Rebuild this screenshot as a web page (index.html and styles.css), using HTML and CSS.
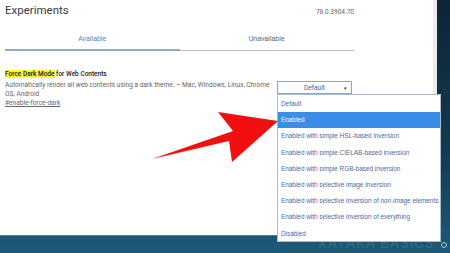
FILE: index.html
```html
<!DOCTYPE html>
<html lang="en">
<head>
    <meta charset="UTF-8">
    <title>Experiments</title>
    <link rel="stylesheet" href="styles.css">
</head>
<body>
    <div class="page">
        <div class="content">
            <header class="top">
                <h1>Experiments</h1>
                <span class="version">78.0.3904.70</span>
            </header>

            <nav class="tabs">
                <div class="tab active">Available</div>
                <div class="tab">Unavailable</div>
            </nav>

            <section class="flag">
                <div class="flag-text">
                    <h3><mark>Force Dark Mode</mark> for Web Contents</h3>
                    <p>Automatically render all web contents using a dark theme. – Mac, Windows, Linux, Chrome OS, Android</p>
                    <a href="#enable-force-dark" class="permalink">#enable-force-dark</a>
                </div>
                <div class="select-box">
                    <span>Default</span>
                    <span class="caret">▾</span>
                </div>
            </section>
        </div>
        <div class="scroll-strip"></div>
    </div>

    <div class="watermark">XATAKA BASICS</div>
    <div class="pin"></div>

    <ul class="dropdown">
        <li>Default</li>
        <li class="selected">Enabled</li>
        <li>Enabled with simple HSL-based inversion</li>
        <li>Enabled with simple CIELAB-based inversion</li>
        <li>Enabled with simple RGB-based inversion</li>
        <li>Enabled with selective image inversion</li>
        <li>Enabled with selective inversion of non-image elements</li>
        <li>Enabled with selective inversion of everything</li>
        <li>Disabled</li>
    </ul>

    <!-- red pointer drawn over the page -->
    <svg class="arrow" width="450" height="253" viewBox="0 0 450 253">
        <polygon points="152,159 233,131 218,112 278,121 232,162 229,141" fill="#f20f0f"/>
    </svg>
</body>
</html>
```

FILE: styles.css
```css
body {
    margin: 0;
    width: 450px;
    height: 253px;
    overflow: hidden;
    font-family: Roboto, "Liberation Sans", sans-serif;
    background: linear-gradient(180deg, #0e2535 0%, #143a50 60%, #1d5a78 100%);
    position: relative;
}

.page {
    display: flex;
    width: 437px;
    height: 235px;
    background: #ffffff;
    border-bottom: 1px solid #4d7f99;
}

.content {
    width: 349px;
    padding-left: 5px;
}

.scroll-strip {
    margin-left: auto;
    width: 4px;
    background: #ececec;
}

.top {
    display: flex;
    justify-content: space-between;
    align-items: baseline;
    padding-top: 3px;
}

.top h1 {
    margin: 0;
    font-size: 11.5px;
    font-weight: 400;
    color: #3a3a3a;
}

.version {
    font-size: 6.5px;
    color: #666;
}

.tabs {
    display: grid;
    grid-template-columns: 1fr 1fr;
    margin-top: 18px;
}

.tab {
    text-align: center;
    font-size: 7px;
    color: #666;
    padding-bottom: 6px;
    border-bottom: 1px solid #bdbdbd;
}

.tab.active {
    color: #5d82b8;
    border-bottom: 2px solid #8eaac8;
}

.flag {
    display: flex;
    margin-top: 19px;
}

.flag-text {
    width: 266px;
}

.flag h3 {
    margin: 0;
    font-size: 6.5px;
    font-weight: 500;
    color: #222;
}

.flag mark {
    background: #fdf23a;
    color: #222;
}

.flag p {
    margin: 3px 0 0;
    font-size: 6.6px;
    line-height: 9px;
    color: #666;
}

.permalink {
    display: block;
    font-size: 6.6px;
    line-height: 9px;
    color: #666;
}

.select-box {
    margin-left: 6px;
    margin-top: 11px;
    width: 73px;
    height: 11px;
    border: 1px solid #8aa6cc;
    display: flex;
    align-items: center;
    justify-content: center;
    position: relative;
    font-size: 6.5px;
    color: #44609a;
}

.caret {
    position: absolute;
    right: 4px;
    font-size: 5px;
    color: #333;
}

.dropdown {
    position: absolute;
    left: 277px;
    top: 94px;
    width: 164px;
    margin: 0;
    padding: 1px 0;
    list-style: none;
    background: #ffffff;
    border: 1px solid #a9bcd2;
    box-sizing: border-box;
    height: 148px;
}

.dropdown li {
    height: 16.2px;
    line-height: 16px;
    padding-left: 3px;
    font-family: "Liberation Sans", Arial, sans-serif;
    font-size: 6.4px;
    color: #4d69a0;
    white-space: nowrap;
}

.dropdown li.selected {
    background: #3a8ee8;
    color: #ffffff;
}

.watermark {
    position: absolute;
    left: 318px;
    top: 235px;
    font-size: 14px;
    letter-spacing: 1px;
    color: #3a6985;
}

.pin {
    position: absolute;
    left: 441px;
    top: 242px;
    width: 4px;
    height: 4px;
    border: 1px solid #a8c6d6;
    border-radius: 50%;
}

.arrow {
    position: absolute;
    left: 0;
    top: 0;
}
```
